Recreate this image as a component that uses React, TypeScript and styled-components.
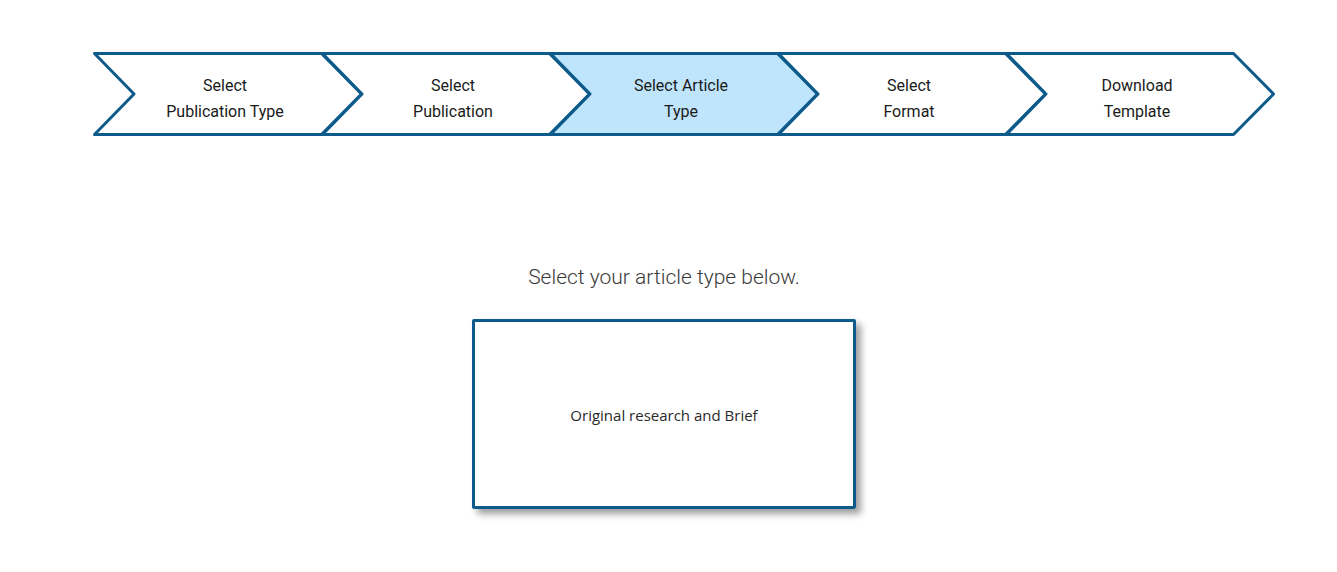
import React from "react";
import styled, { createGlobalStyle } from "styled-components";

const Global = createGlobalStyle`
  html, body { margin: 0; padding: 0; background: #fff; }
  body { font-family: Roboto, "Liberation Sans", sans-serif; }
`;

const STROKE = "#0d5a8b";

const Page = styled.div`
  width: 1337px;
  min-height: 572px;
`;

const Steps = styled.div`
  display: flex;
  padding: 52px 0 0 93px;
`;

const Step = styled.div`
  position: relative;
  width: 270px;
  height: 84px;
  flex: 0 0 auto;
  & + & {
    margin-left: -42px;
  }
`;

const Shape = styled.svg`
  position: absolute;
  inset: 0;
  display: block;
`;

const StepLabel = styled.div`
  position: relative;
  box-sizing: border-box;
  width: 228px;
  padding: 21px 0 0 36px;
  text-align: center;
  font-family: Roboto, "Liberation Sans", sans-serif;
  font-size: 16px;
  line-height: 26px;
  color: #1a1a1a;
`;

const Main = styled.div`
  display: flex;
  flex-direction: column;
  align-items: center;
  padding-right: 9px;
`;

const Heading = styled.h2`
  margin: 129px 0 0;
  font-family: Roboto, "Liberation Sans", sans-serif;
  font-weight: 300;
  font-size: 21px;
  line-height: 24px;
  color: #3a3a3a;
`;

const Card = styled.div`
  margin-top: 30px;
  box-sizing: border-box;
  width: 384px;
  height: 190px;
  border: 3px solid ${STROKE};
  border-radius: 2px;
  box-shadow: 5px 5px 7px rgba(0, 0, 0, 0.38);
  display: flex;
  align-items: center;
  justify-content: center;
  padding-top: 2px;
  font-family: "Open Sans", "Liberation Sans", sans-serif;
  font-size: 15px;
  color: #2a2a2a;
  cursor: pointer;
`;

type StepData = { lines: string[]; active?: boolean };

const steps: StepData[] = [
  { lines: ["Select", "Publication Type"] },
  { lines: ["Select", "Publication"] },
  { lines: ["Select Article", "Type"], active: true },
  { lines: ["Select", "Format"] },
  { lines: ["Download", "Template"] },
];

function Chevron({ active }: { active?: boolean }) {
  return (
    <Shape width="270" height="84" viewBox="0 0 270 84">
      <polygon
        points="1.5,1.5 228.5,1.5 268.5,42 228.5,82.5 1.5,82.5 41,42"
        fill={active ? "#bfe5fc" : "#ffffff"}
        stroke={STROKE}
        strokeWidth="3"
        strokeLinejoin="round"
      />
    </Shape>
  );
}

export default function App() {
  return (
    <Page>
      <Global />
      <Steps>
        {steps.map((s, i) => (
          <Step key={i}>
            <Chevron active={s.active} />
            <StepLabel>
              {s.lines.map((l, j) => (
                <div key={j}>{l}</div>
              ))}
            </StepLabel>
          </Step>
        ))}
      </Steps>
      <Main>
        <Heading>Select your article type below.</Heading>
        <Card>Original research and Brief</Card>
      </Main>
    </Page>
  );
}
